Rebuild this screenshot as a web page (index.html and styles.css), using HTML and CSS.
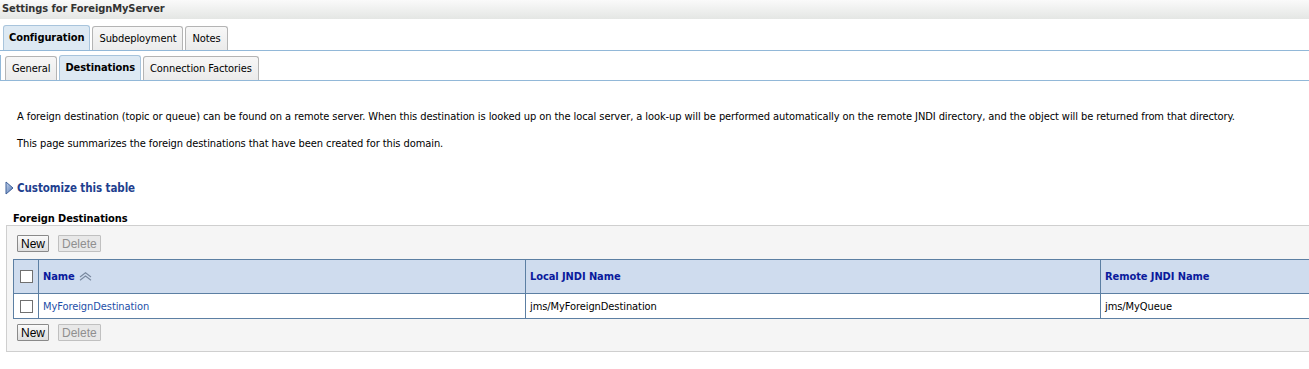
FILE: index.html
```html
<!DOCTYPE html>
<html lang="en">
<head>
  <meta charset="UTF-8" />
  <title>Settings for ForeignMyServer</title>
  <link rel="stylesheet" href="styles.css">
</head>
<body>

<div class="titlebar">Settings for ForeignMyServer</div>

<div class="tabs main-tabs">
  <a class="tab selected" href="#">Configuration</a>
  <a class="tab" href="#">Subdeployment</a>
  <a class="tab" href="#">Notes</a>
</div>

<div class="subtab-box">
  <div class="tabs sub-tabs">
    <a class="tab" href="#">General</a>
    <a class="tab selected" href="#">Destinations</a>
    <a class="tab" href="#">Connection Factories</a>
  </div>
</div>

<div class="content">
  <p class="intro">A foreign destination (topic or queue) can be found on a remote server. When this destination is looked up on the local server, a look-up will be performed automatically on the remote JNDI directory, and the object will be returned from that directory.</p>
  <p class="intro">This page summarizes the foreign destinations that have been created for this domain.</p>

  <a class="customize" href="#">
    <svg width="9" height="14" viewBox="0 0 9 14">
      <defs>
        <linearGradient id="tri" x1="0" y1="0" x2="1" y2="1">
          <stop offset="0" stop-color="#c9d8ee"/>
          <stop offset="1" stop-color="#4a6fae"/>
        </linearGradient>
      </defs>
      <path d="M1 1 L8 7 L1 13 Z" fill="url(#tri)" stroke="#3d5f98" stroke-width="1"/>
    </svg>
    Customize this table
  </a>

  <div class="table-title">Foreign Destinations</div>

  <div class="table-box">
    <div class="controls">
      <button class="btn">New</button>
      <button class="btn" disabled>Delete</button>
    </div>

    <table class="grid">
      <thead>
        <tr>
          <th class="col-check"><span class="check"></span></th>
          <th class="col-name">Name
            <svg class="sort" width="13" height="9" viewBox="0 0 13 9">
              <path d="M1 5 L6.5 0.8 L12 5" fill="none" stroke="#7a8aa0" stroke-width="1.1"/>
              <path d="M1 8.2 L6.5 4 L12 8.2" fill="none" stroke="#7a8aa0" stroke-width="1.1"/>
            </svg>
          </th>
          <th class="col-local">Local JNDI Name</th>
          <th>Remote JNDI Name</th>
        </tr>
      </thead>
      <tbody>
        <tr>
          <td class="col-check"><span class="check"></span></td>
          <td><a href="#">MyForeignDestination</a></td>
          <td>jms/MyForeignDestination</td>
          <td>jms/MyQueue</td>
        </tr>
      </tbody>
    </table>

    <div class="controls">
      <button class="btn">New</button>
      <button class="btn" disabled>Delete</button>
    </div>
  </div>
</div>

</body>
</html>
```

FILE: styles.css
```css
html {
  overflow: hidden;
}

body {
  margin: 0;
  font-family: "DejaVu Sans Condensed", "DejaVu Sans", sans-serif;
  font-size: 11px;
  letter-spacing: -0.08px;
  color: #000;
  background: #fff;
}

.titlebar {
  height: 19px;
  line-height: 18px;
  padding-left: 2px;
  font-weight: bold;
  color: #333;
  background: linear-gradient(#fafafa, #e4e6e4);
}

.tabs {
  display: flex;
  gap: 2px;
  align-items: flex-end;
}

.main-tabs {
  margin-top: 6px;
  padding-left: 3px;
  height: 25px;
  border-bottom: 1px solid #92b8d8;
}

.subtab-box {
  margin-top: 4px;
  border-left: 1px solid #92b8d8;
  border-bottom: 1px solid #92b8d8;
  padding-left: 4px;
}

.sub-tabs {
  height: 25px;
}

.tab {
  display: block;
  height: 23px;
  line-height: 23px;
  padding: 0 6px;
  border: 1px solid #b4b4b4;
  border-bottom: none;
  border-radius: 3px 3px 0 0;
  background: linear-gradient(#f7f7f7, #ebebeb);
  color: #000;
  text-decoration: none;
}

.tab.selected {
  font-weight: bold;
  background: #dde9f3;
  border-color: #a8c4dc;
  height: 24px;
  padding: 0 5px;
}

.content {
  padding-top: 31px;
}

.intro {
  margin: 0 0 18px 17px;
  line-height: 9px;
  white-space: nowrap;
}

.customize {
  display: flex;
  align-items: center;
  gap: 3px;
  margin: 33px 0 0 5px;
  font-weight: bold;
  font-size: 11.5px;
  color: #1f3f8f;
  text-decoration: none;
}

.table-title {
  margin: 18px 0 0 13px;
  font-weight: bold;
  height: 12px;
  line-height: 12px;
}

.table-box {
  margin: 0 -30px 0 6px;
  background: #f5f5f5;
  border: 1px solid #cfcfcf;
  padding: 9px 0 10px 6px;
}

.controls {
  display: flex;
  gap: 9px;
  padding-left: 4px;
}

.btn {
  font-family: "Liberation Sans", Arial, sans-serif;
  font-size: 12px;
  letter-spacing: 0;
  height: 17px;
  padding: 0 3px;
  background: linear-gradient(#fafafa, #dedede);
  border: 1px solid #8a8a8a;
  border-radius: 1px;
  color: #000;
  line-height: 14px;
}

.btn:disabled {
  color: #8f8f8f;
  border-color: #c0c0c0;
  background: #e8e8e8;
}

.grid {
  margin: 7px 0 5px;
  width: 1330px;
  border-collapse: collapse;
  table-layout: fixed;
}

.grid th, .grid td {
  border: 1px solid #5c7fa3;
  text-align: left;
  padding: 0 4px;
}

.grid th {
  height: 33px;
  background: #cfdcee;
  color: #0a1a9c;
  font-weight: bold;
}

.grid td {
  height: 24px;
  background: #fff;
}

.grid td a {
  color: #1e4fa8;
  text-decoration: none;
}

.grid .col-check {
  width: 16px;
}

.col-name {
  width: 478px;
}

.col-local {
  width: 566px;
}

.check {
  display: block;
  width: 11px;
  height: 11px;
  border: 1px solid #707070;
  background: #fff;
  margin-left: 2px;
}

.sort {
  vertical-align: -1px;
  margin-left: 1px;
}
```
